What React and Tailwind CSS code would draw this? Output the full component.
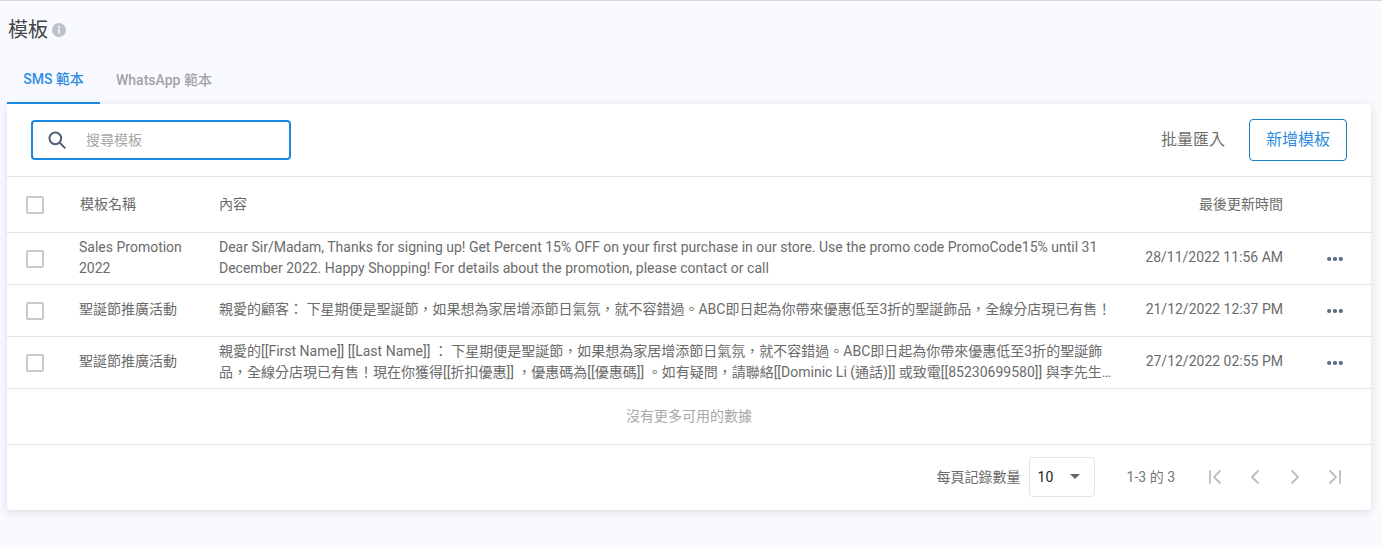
import React from "react";
import { ChevronLeft, ChevronRight, ChevronFirst, ChevronLast, MoreHorizontal } from "lucide-react";

const font = "font-['Roboto','Noto_Sans_CJK_TC',sans-serif]";

const rows = [
  {
    name: "Sales Promotion 2022",
    content:
      "Dear Sir/Madam, Thanks for signing up! Get Percent 15% OFF on your first purchase in our store. Use the promo code PromoCode15% until 31 December 2022. Happy Shopping! For details about the promotion, please contact or call",
    date: "28/11/2022 11:56 AM",
  },
  {
    name: "聖誕節推廣活動",
    content:
      "親愛的顧客： 下星期便是聖誕節，如果想為家居增添節日氣氛，就不容錯過。ABC即日起為你帶來優惠低至3折的聖誕飾品，全線分店現已有售！",
    date: "21/12/2022 12:37 PM",
  },
  {
    name: "聖誕節推廣活動",
    content:
      "親愛的[[First Name]] [[Last Name]] ： 下星期便是聖誕節，如果想為家居增添節日氣氛，就不容錯過。ABC即日起為你帶來優惠低至3折的聖誕飾品，全線分店現已有售！現在你獲得[[折扣優惠]] ，優惠碼為[[優惠碼]] 。如有疑問，請聯絡[[Dominic Li (通話)]] 或致電[[85230699580]] 與李先生聯絡。多謝支持，祝你聖誕快樂！",
    date: "27/12/2022 02:55 PM",
  },
];

function Box() {
  return <span className="block h-[18px] w-[18px] rounded-[2px] border-2 border-[#c9c9c9] bg-white" />;
}

function Row({ name, content, date }) {
  return (
    <div className="flex h-[52px] items-center border-b border-[#e2e2e2] text-sm leading-[21px] text-[#6b6b6b]">
      <div className="w-[72px] pl-[19px]">
        <Box />
      </div>
      <div className="w-[140px] pb-[2px] pr-4">{name}</div>
      <div className="w-[903px] overflow-hidden pb-[2px]">
        <p className="line-clamp-2">{content}</p>
      </div>
      <div className="w-[161px] whitespace-nowrap pb-[2px] text-right">{date}</div>
      <div className="flex flex-1 justify-start pl-[42px]">
        <MoreHorizontal className="h-[20px] w-[20px] text-[#4f6077]" strokeWidth={3} />
      </div>
    </div>
  );
}

export default function App() {
  return (
    <div className={`${font} min-h-[548px] border-t border-[#d5d7da] bg-[#f9faff]`}>
      <div className="flex h-[59px] items-center pl-2 pb-[1px]">
        <h1 className="text-xl font-normal text-[#444]">模板</h1>
        <svg viewBox="0 0 24 24" className="ml-[3px] h-[16px] w-[16px] fill-[#b9c3c9]">
          <path d="M12 1.5a10.5 10.5 0 1 0 0 21 10.5 10.5 0 0 0 0-21zm1.3 16h-2.6v-7h2.6zm0-9h-2.6v-2.6h2.6z" />
        </svg>
      </div>

      <div className="ml-[7px] flex h-11 text-sm font-medium">
        <div className="flex w-[93px] items-center justify-center border-b-2 border-[#1a87e0] pb-[5px] text-[#2f8ce0]">SMS 範本</div>
        <div className="flex items-center px-4 pb-[5px] text-[#a3a3a3]">WhatsApp 範本</div>
      </div>

      <main className="ml-[7px] mr-[11px] h-[406px] rounded-[4px] bg-white shadow-[0_2px_8px_rgba(50,60,90,0.15)]">
        <div className="flex h-[73px] items-center border-b border-[#e2e2e2] pb-[1px] pl-6 pr-6">
          <div className="flex h-10 w-[260px] items-center rounded-[4px] border-2 border-[#1a87e0] pl-[14px]">
            <svg viewBox="0 0 24 24" className="h-[20px] w-[20px] fill-none stroke-[#4f6077] stroke-[2.4]">
              <circle cx="10" cy="10" r="7" />
              <path d="M15 15l7 7" />
            </svg>
            <span className="ml-[19px] text-sm text-[#a8a8a8]">搜尋模板</span>
          </div>
          <div className="ml-auto mr-6 text-base text-[#707070]">批量匯入</div>
          <div className="flex h-[42px] w-[98px] items-center justify-center rounded-[4px] border border-[#1a7fc4] text-base text-[#2f8ce0]">新增模板</div>
        </div>

        <div className="flex h-[56px] items-center border-b border-[#e2e2e2] text-sm text-[#6b6b6b]">
          <div className="w-[73px] pl-[19px]">
            <Box />
          </div>
          <div className="w-[139px] pb-[2px]">模板名稱</div>
          <div className="w-[903px] pb-[2px]">內容</div>
          <div className="w-[161px] pb-[2px] text-right">最後更新時間</div>
        </div>

        {rows.map((r, i) => (
          <Row key={i} {...r} />
        ))}

        <div className="flex h-[56px] items-center justify-center border-b border-[#e2e2e2] pb-[2px] text-sm text-[#a8a8a8]">沒有更多可用的數據</div>

        <div className="flex h-[65px] items-center justify-end pb-[2px] pr-[24px] text-sm text-[#6b6b6b]">
          <span>每頁記錄數量</span>
          <div className="ml-2 flex h-10 w-[66px] items-center rounded-[4px] border border-[#e4e4e4] pl-2">
            <span className="text-sm text-[#222]">10</span>
            <span className="ml-[17px] h-0 w-0 border-x-[5px] border-t-[5px] border-x-transparent border-t-[#666]" />
          </div>
          <span className="ml-8 text-sm text-[#777]">1-3 的 3</span>
          <div className="ml-[28px] flex gap-[16px] text-[#bdbdbd]">
            <ChevronFirst className="h-6 w-6" strokeWidth={1.8} />
            <ChevronLeft className="h-6 w-6" strokeWidth={1.8} />
            <ChevronRight className="h-6 w-6" strokeWidth={1.8} />
            <ChevronLast className="h-6 w-6" strokeWidth={1.8} />
          </div>
        </div>
      </main>
    </div>
  );
}
